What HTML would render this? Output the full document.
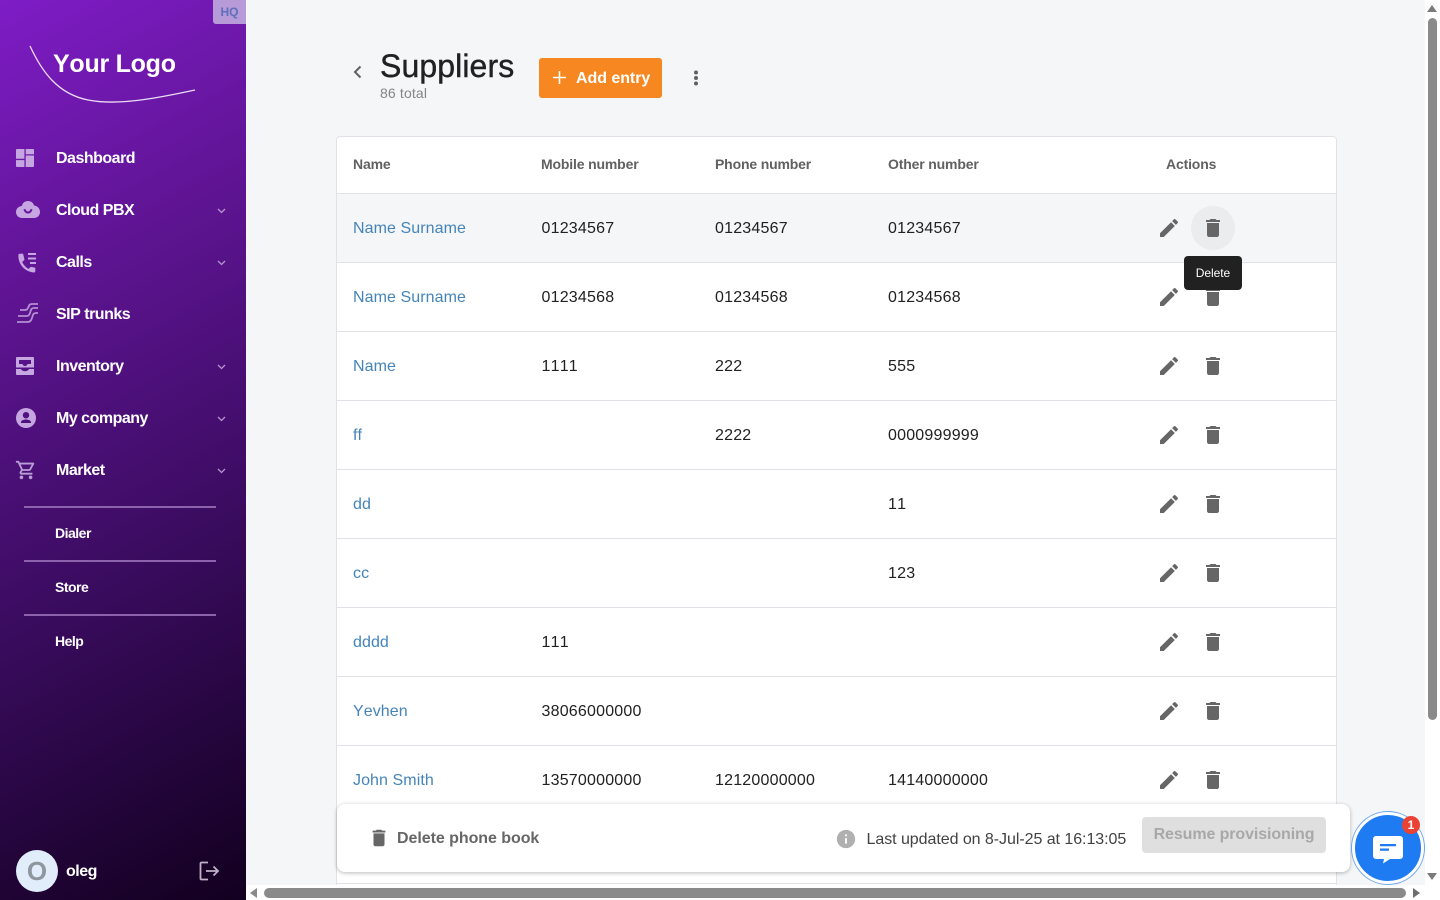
<!DOCTYPE html>
<html lang="en"><head><meta charset="utf-8"><title>Suppliers</title>
<style>
*{box-sizing:border-box}
html,body{margin:0;width:1440px;height:900px;overflow:hidden;background:#fff;font-family:"Liberation Sans",Arial,sans-serif;color:#212121;font-kerning:none}
.a{position:absolute;white-space:nowrap}
#side{position:absolute;left:0;top:0;width:246px;height:900px;background:linear-gradient(152deg,#7e1cc6 0%,#5e1492 30%,#3c0c62 60%,#12001f 100%)}
#main{position:absolute;left:246px;top:0;width:1179px;height:885px;background:#f5f6f8;overflow:hidden}
.nav{position:absolute;left:56px;font-size:16px;line-height:20px;font-weight:bold;color:#fff;white-space:nowrap;letter-spacing:-.5px}
.sub{position:absolute;left:55px;font-size:14px;line-height:18px;font-weight:bold;color:#fff;letter-spacing:-.5px}
.hr{position:absolute;left:24px;width:192px;height:2px;background:#8b62ab}
.ic{position:absolute;fill:#c6a6e0}
.chev{position:absolute;left:217px;width:9px;height:6px;fill:none;stroke:#b595cf;stroke-width:1.3}
.row{position:absolute;left:337px;width:999px;height:69px;background:#fff;border-bottom:1px solid #e0e2e8}
.t{position:absolute;top:23px;font-size:16px;line-height:24px;color:#212121;white-space:nowrap;letter-spacing:.2px}
.n{left:16px;color:#4584b8;letter-spacing:.08px}
.m{left:204.5px}.p{left:378px}.o{left:551px}
.e,.d{position:absolute;top:22px;width:24px;height:24px;fill:#666}
.e{left:820px}.d{left:864px}
.th{position:absolute;top:18px;font-size:14px;line-height:18px;font-weight:bold;color:#616161;white-space:nowrap;letter-spacing:-.16px}
</style></head><body>
<svg width="0" height="0" style="position:absolute"><defs>
<symbol id="del" viewBox="0 0 24 24"><path d="M6 19c0 1.100.9 2 2 2h8c1.100 0 2-.9 2-2V7H6v12zM19 4h-3.500l-1-1h-5l-1 1H5v2h14V4z"/></symbol>
<symbol id="edit" viewBox="0 0 24 24"><path d="M3 17.250V21h3.750L17.810 9.940l-3.750-3.750L3 17.250zM20.710 7.040c.39-.39.39-1.020 0-1.410l-2.340-2.340c-.39-.39-1.020-.39-1.410 0l-1.830 1.830 3.750 3.750 1.830-1.830z"/></symbol>
</defs></svg>

<div id="side">
<div class="a" style="left:213px;top:0;width:33px;height:24px;background:#b79ad8;border-bottom-left-radius:3px;color:#5c6fb8;font-size:12px;font-weight:bold;line-height:24px;text-align:center">HQ</div>
<div class="a" style="left:53px;top:48px;font-size:25px;line-height:32px;font-weight:bold;color:#fff;letter-spacing:-.25px">Your Logo</div>
<svg class="a" style="left:28px;top:44px" width="170" height="60" fill="none"><path d="M2 2C14 28 30 50 60 56C90 62 130 54 167 46" stroke="#e9dcf5" stroke-width="1.300"/></svg>

<svg class="ic" style="left:16px;top:149px" width="18" height="18" viewBox="0 0 18 18"><path d="M1 0h7.400v9.800H0V1a1 1 0 0 1 1-1zM9.700 0H17a1 1 0 0 1 1 1v4.200H9.700zM9.700 6.500H18V17a1 1 0 0 1-1 1H9.700zM0 11.100h8.400V18H1a1 1 0 0 1-1-1z"/></svg>
<div class="nav" style="top:149px">Dashboard</div>

<svg class="ic" style="left:16px;top:201px" width="24" height="17" viewBox="0 0 24 17"><path fill-rule="evenodd" d="M12 0c3 0 5.300 1.800 6.100 4.500C21.500 5 24 7.500 24 11c0 3.500-2.700 6-6 6H6c-3.300 0-6-2.500-6-6 0-3.200 2.400-5.600 5.800-6C6.600 1.800 9 0 12 0zM7.500 8.500c.8 2.700 2.500 4 4.500 4s3.700-1.300 4.500-4l-1.800-.6c-.5 1.700-1.500 2.600-2.700 2.600s-2.200-.9-2.700-2.600z"/></svg>
<div class="nav" style="top:201px">Cloud PBX</div>
<svg class="chev" style="top:208px" viewBox="0 0 9 6"><path d="M1 1l3.500 3.500L8 1"/></svg>

<svg class="ic" style="left:16px;top:252px" width="22" height="22" viewBox="0 0 22 22"><path d="M6.500 1.500 2.500 2C1.500 11 8 20 18.500 20.500l.8-1v-3.800l-4.500-1-2.200 2.200C10 15.500 7.500 13 6.200 10l2.300-2.300-1.200-5.200zM12 1h8v2h-8zM12 5.500h8v2h-8zM14 10h6v2h-6z"/></svg>
<div class="nav" style="top:253px">Calls</div>
<svg class="chev" style="top:260px" viewBox="0 0 9 6"><path d="M1 1l3.500 3.500L8 1"/></svg>

<svg class="a" style="left:17px;top:303px" width="22" height="21" viewBox="0 0 22 21" fill="none" stroke="#b48fd2" stroke-width="1.800"><path d="M21 1h-6c-3 0-3 2-4 4s-2 2-4 2H3"/><path d="M21 5h-4c-3 0-3 2-4 5s-2 3-5 3H1"/><path d="M21 10h-2c-3 0-3 2-4 5s-2 4-5 4H0"/></svg>
<div class="nav" style="top:305px">SIP trunks</div>

<svg class="ic" style="left:16px;top:357px" width="18" height="18" viewBox="0 0 18 18"><path fill-rule="evenodd" d="M1 0h16a1 1 0 0 1 1 1v9.500H0V1a1 1 0 0 1 1-1zM3 3v4h3.500c.3 1.200 1.300 2 2.500 2s2.200-.8 2.500-2H15V3zM0 12h5c.5 1.300 2.200 2.200 4 2.200s3.500-.9 4-2.200h5v5a1 1 0 0 1-1 1H1a1 1 0 0 1-1-1z"/></svg>
<div class="nav" style="top:357px">Inventory</div>
<svg class="chev" style="top:364px" viewBox="0 0 9 6"><path d="M1 1l3.500 3.500L8 1"/></svg>

<svg class="ic" style="left:16px;top:408px" width="20" height="20" viewBox="0 0 20 20"><path fill-rule="evenodd" d="M10 0a10 10 0 1 1 0 20 10 10 0 0 1 0-20zM10 4a3.200 3.200 0 1 0 0 6.400A3.200 3.200 0 0 0 10 4zM10 11.500c-2.600 0-5 1.200-5 2.700v.8h10v-.8c0-1.500-2.400-2.700-5-2.700z"/></svg>
<div class="nav" style="top:409px">My company</div>
<svg class="chev" style="top:416px" viewBox="0 0 9 6"><path d="M1 1l3.500 3.500L8 1"/></svg>

<svg class="ic" style="left:15px;top:459px;fill:#b79fd6" width="22" height="22" viewBox="0 0 24 24"><path d="M15.550 13c.75 0 1.410-.41 1.750-1.030l3.580-6.490c.37-.66-.11-1.480-.87-1.480H5.210l-.94-2H1v2h2l3.600 7.590-1.350 2.440C4.520 15.370 5.480 17 7 17h12v-2H7l1.100-2h7.450zM6.160 6h12.150l-2.760 5H8.530L6.160 6zM7 18c-1.100 0-1.990.9-1.990 2S5.900 22 7 22s2-.9 2-2-.9-2-2-2zm10 0c-1.100 0-1.990.9-1.990 2s.89 2 1.990 2 2-.9 2-2-.9-2-2-2z"/></svg>
<div class="nav" style="top:461px">Market</div>
<svg class="chev" style="top:468px" viewBox="0 0 9 6"><path d="M1 1l3.500 3.500L8 1"/></svg>

<div class="hr" style="top:506px"></div>
<div class="sub" style="top:524px">Dialer</div>
<div class="hr" style="top:560px"></div>
<div class="sub" style="top:578px">Store</div>
<div class="hr" style="top:614px"></div>
<div class="sub" style="top:632px">Help</div>

<div class="a" style="left:16px;top:850px;width:42px;height:42px;border-radius:50%;background:#e1edfa;color:#8e969e;font-size:26px;font-weight:bold;line-height:42px;text-align:center">O</div>
<div class="nav" style="left:66px;top:862px">oleg</div>
<svg class="a" style="left:199px;top:861px" width="21" height="20" viewBox="0 0 21 20" fill="none" stroke="#bfb2c8" stroke-width="1.800"><path d="M9 1.500H2.500a1 1 0 0 0-1 1v15a1 1 0 0 0 1 1H9"/><path d="M7 10h12M14.500 5.500 19 10l-4.500 4.500"/></svg>
</div>

<div id="main"></div>

<svg class="a" style="left:353px;top:65px" width="10" height="14" viewBox="0 0 10 14" fill="none" stroke="#616161" stroke-width="2"><path d="M7.500 1.500 2 7l5.500 5.500"/></svg>
<div class="a" style="left:380px;top:46px;font-size:32px;line-height:40px;color:#212121;letter-spacing:.1px;-webkit-text-stroke:.4px #212121">Suppliers</div>
<div class="a" style="left:380px;top:84px;font-size:14px;line-height:18px;color:#858585;letter-spacing:.15px">86 total</div>
<div class="a" style="left:539px;top:58px;width:123px;height:40px;background:#f78720;border-radius:3px"></div>
<svg class="a" style="left:552px;top:70px" width="15" height="15" viewBox="0 0 15 15" fill="none" stroke="#fff" stroke-width="1.600"><path d="M7.500 1v13M1 7.500h13"/></svg>
<div class="a" style="left:576px;top:69px;font-size:16px;line-height:20px;font-weight:bold;color:#fff;letter-spacing:-.05px">Add entry</div>
<svg class="a" style="left:693px;top:70px" width="6" height="16" viewBox="0 0 6 16" fill="#616161"><circle cx="3" cy="2.500" r="2"/><circle cx="3" cy="8" r="2"/><circle cx="3" cy="13.500" r="2"/></svg>

<div class="a" style="left:336px;top:136px;width:1001px;height:760px;background:#fff;border:1px solid #e0e2e8;border-radius:4px 4px 0 0"></div>
<div class="row" style="top:137px;height:57px;background:#fff;border-radius:4px 4px 0 0">
<div class="th" style="left:16px">Name</div><div class="th" style="left:204px">Mobile number</div><div class="th" style="left:378px">Phone number</div><div class="th" style="left:551px">Other number</div><div class="th" style="left:829px">Actions</div>
</div>

<div class="row" style="top:194px;background:#f5f6f8"><div class="t n">Name Surname</div><div class="t m">01234567</div><div class="t p">01234567</div><div class="t o">01234567</div>
<svg class="e"><use href="#edit"/></svg><div class="a" style="left:854px;top:12px;width:44px;height:44px;border-radius:50%;background:#ebecee"></div><svg class="d"><use href="#del"/></svg></div>
<div class="row" style="top:263px"><div class="t n">Name Surname</div><div class="t m">01234568</div><div class="t p">01234568</div><div class="t o">01234568</div><svg class="e"><use href="#edit"/></svg><svg class="d"><use href="#del"/></svg></div>
<div class="row" style="top:332px"><div class="t n">Name</div><div class="t m">1111</div><div class="t p">222</div><div class="t o">555</div><svg class="e"><use href="#edit"/></svg><svg class="d"><use href="#del"/></svg></div>
<div class="row" style="top:401px"><div class="t n">ff</div><div class="t p">2222</div><div class="t o">0000999999</div><svg class="e"><use href="#edit"/></svg><svg class="d"><use href="#del"/></svg></div>
<div class="row" style="top:470px"><div class="t n">dd</div><div class="t o">11</div><svg class="e"><use href="#edit"/></svg><svg class="d"><use href="#del"/></svg></div>
<div class="row" style="top:539px"><div class="t n">cc</div><div class="t o">123</div><svg class="e"><use href="#edit"/></svg><svg class="d"><use href="#del"/></svg></div>
<div class="row" style="top:608px"><div class="t n">dddd</div><div class="t m">111</div><svg class="e"><use href="#edit"/></svg><svg class="d"><use href="#del"/></svg></div>
<div class="row" style="top:677px"><div class="t n">Yevhen</div><div class="t m">38066000000</div><svg class="e"><use href="#edit"/></svg><svg class="d"><use href="#del"/></svg></div>
<div class="row" style="top:746px"><div class="t n">John Smith</div><div class="t m">13570000000</div><div class="t p">12120000000</div><div class="t o">14140000000</div><svg class="e"><use href="#edit"/></svg><svg class="d"><use href="#del"/></svg></div>
<div class="a" style="left:337px;top:883px;width:999px;height:1px;background:#e0e2e8"></div>

<div class="a" style="left:1184px;top:256px;width:58px;height:34px;background:#212121;border-radius:4px;color:#fff;font-size:12px;line-height:34px;text-align:center;letter-spacing:-.05px">Delete</div>

<div class="a" style="left:337px;top:804px;width:1013px;height:68px;background:#fff;border-radius:8px;box-shadow:0 1px 4px rgba(0,0,0,.28)"></div>
<svg class="a" style="left:368px;top:827px;fill:#666" width="22" height="22" viewBox="0 0 24 24"><use href="#del"/></svg>
<div class="a" style="left:397px;top:829px;font-size:16px;line-height:20px;font-weight:bold;color:#666;letter-spacing:-.05px">Delete phone book</div>
<svg class="a" style="left:835px;top:828px;fill:#b0b0b0" width="22" height="22" viewBox="0 0 24 24"><path d="M12 2C6.480 2 2 6.480 2 12s4.480 10 10 10 10-4.480 10-10S17.520 2 12 2zm1 15h-2v-6h2v6zm0-8h-2V7h2v2z"/></svg>
<div class="a" style="left:866.500px;top:830px;font-size:16px;line-height:20px;color:#424242;letter-spacing:-.05px">Last updated on 8-Jul-25 at 16:13:05</div>
<div class="a" style="left:1142px;top:817px;width:184px;height:36px;background:#dfdfdf;border-radius:4px;color:#a8a8a8;font-size:16px;font-weight:bold;line-height:36px;text-align:center;letter-spacing:-.1px">Resume provisioning</div>

<div class="a" style="left:1352px;top:812px;width:72px;height:72px;border-radius:50%;background:#1e7bf2;border:3px solid #fff;box-shadow:0 0 0 1px #6aa5ee,inset 0 0 0 0 #fff"></div>
<svg class="a" style="left:1373px;top:836px" width="30" height="28" viewBox="0 0 30 28"><path fill="#fff" d="M3 0h24a3 3 0 0 1 3 3v17a3 3 0 0 1-3 3H17l-7 4.500 1-4.500H3a3 3 0 0 1-3-3V3a3 3 0 0 1 3-3z"/><path fill="#1e7bf2" d="M7 8h16v2.200H7zM7 12.500h9v2.200H7z"/></svg>
<div class="a" style="left:1402px;top:816px;width:18px;height:18px;border-radius:50%;background:#ea4335;color:#fff;font-size:12px;font-weight:bold;line-height:18px;text-align:center">1</div>

<div class="a" style="left:246px;top:885px;width:1179px;height:15px;background:#fff"></div>
<div class="a" style="left:1425px;top:0;width:15px;height:900px;background:#fff"></div>
<div class="a" style="left:264px;top:888px;width:1142px;height:10px;border-radius:5px;background:#8a8a8a"></div>
<svg class="a" style="left:249px;top:888px" width="10" height="10" fill="#8a8a8a"><path d="M8 0v10L1 5z"/></svg>
<svg class="a" style="left:1412px;top:888px" width="10" height="10" fill="#6e6e6e"><path d="M1 0v10l7-5z"/></svg>
<svg class="a" style="left:1427px;top:4px" width="10" height="10" fill="#7a7a7a"><path d="M0 8h10L5 1z"/></svg>
<svg class="a" style="left:1427px;top:872px" width="10" height="10" fill="#7a7a7a"><path d="M0 1h10L5 8z"/></svg>
<div class="a" style="left:1428px;top:18px;width:9px;height:702px;border-radius:5px;background:#8a8a8a"></div>
</body></html>
